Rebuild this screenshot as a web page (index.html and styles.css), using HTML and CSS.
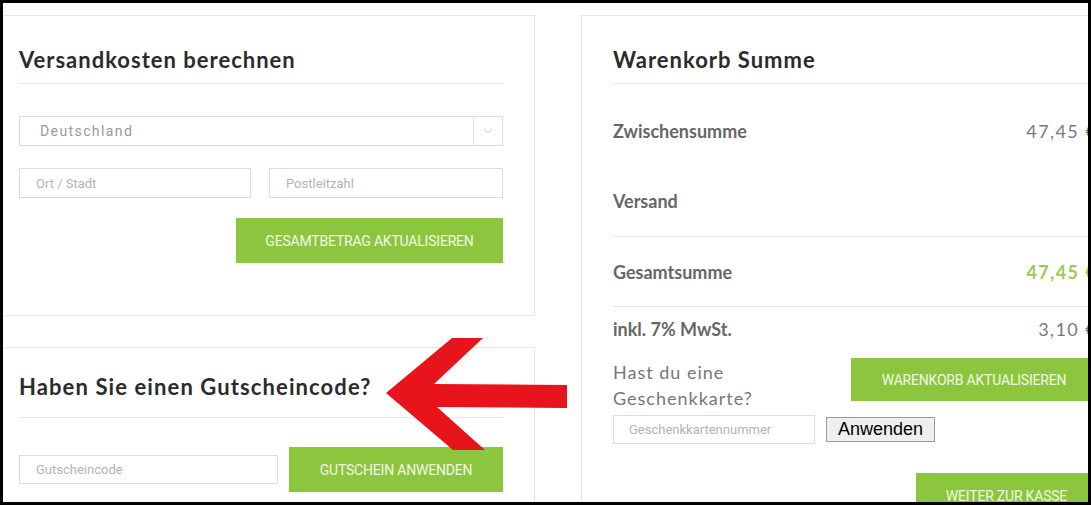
FILE: index.html
```html
<!DOCTYPE html>
<html lang="de">
<head>
<meta charset="utf-8">
<title>Warenkorb</title>
<link rel="stylesheet" href="styles.css">
</head>
<body>
<div class="frame">
  <div class="layout">
    <div class="left-col">
      <section class="panel panel-shipping">
        <h2 class="panel-title">Versandkosten berechnen</h2>
        <div class="select">
          <span class="select-value">Deutschland</span>
          <span class="select-toggle">
            <svg width="10" height="6" viewBox="0 0 10 6"><path d="M1 1 L5 5 L9 1" fill="none" stroke="#c8c8c8" stroke-width="1"/></svg>
          </span>
        </div>
        <div class="field-row">
          <div class="field"><span class="placeholder">Ort / Stadt</span></div>
          <div class="field"><span class="placeholder">Postleitzahl</span></div>
        </div>
        <div class="btn-row">
          <button class="btn btn-update">GESAMTBETRAG AKTUALISIEREN</button>
        </div>
      </section>
      <section class="panel panel-coupon">
        <h2 class="panel-title coupon-title">Haben Sie einen Gutscheincode?</h2>
        <div class="coupon-row">
          <div class="field coupon-field"><span class="placeholder">Gutscheincode</span></div>
          <button class="btn btn-coupon">GUTSCHEIN ANWENDEN</button>
        </div>
      </section>
    </div>
    <section class="panel panel-totals">
      <h2 class="panel-title">Warenkorb Summe</h2>
      <div class="total-row row-sub"><span class="label">Zwischensumme</span><span class="value">47,45 €</span></div>
      <div class="total-row row-ship"><span class="label">Versand</span></div>
      <div class="total-row row-sum"><span class="label">Gesamtsumme</span><span class="value value-green">47,45 €</span></div>
      <div class="total-row row-tax"><span class="label">inkl. 7% MwSt.</span><span class="value">3,10 €</span></div>
      <div class="gift">
        <div class="gift-left">
          <p class="gift-text">Hast du eine Geschenkkarte?</p>
          <div class="gift-form">
            <div class="field gift-field"><span class="placeholder">Geschenkkartennummer</span></div>
            <button class="native-btn">Anwenden</button>
          </div>
        </div>
        <button class="btn btn-cart">WARENKORB AKTUALISIEREN</button>
      </div>
      <div class="checkout-row">
        <button class="btn btn-checkout">WEITER ZUR KASSE</button>
      </div>
    </section>
  </div>
  <svg class="arrow" width="1091" height="505" viewBox="0 0 1091 505">
    <polygon points="386,393 452,338 483,338 434,384 567,385 567,408 437,407 485,450 453,450" fill="#e8141c"/>
  </svg>
</div>
</body>
</html>
```
FILE: styles.css
```css
* { box-sizing: border-box; }
html, body { margin: 0; padding: 0; background: #000; }
.frame {
  position: relative;
  width: 1091px;
  height: 505px;
  border: 3px solid #000;
  background: #fff;
  overflow: hidden;
  font-family: Lato, "Noto Sans", sans-serif;
}
.layout { display: flex; align-items: flex-start; }
.left-col { width: 532px; flex: none; margin-top: 12px; }
.panel { border: 1px solid #e6e6e6; background: #fff; }
.panel-shipping, .panel-coupon { border-left: none; padding: 0 31px 0 16px; }
.panel-shipping { padding-bottom: 52px; }
.panel-coupon { margin-top: 31px; height: 200px; }
.panel-title {
  margin: 0;
  padding: 29px 0 8px;
  line-height: 30px;
  font-size: 22px;
  font-weight: 700;
  letter-spacing: 1px;
  color: #2b2b2b;
  border-bottom: 1px solid #e6e6e6;
}
.coupon-title { padding: 24px 0 15px; letter-spacing: 1.1px; }
.select {
  margin-top: 32px;
  height: 30px;
  border: 1px solid #dcdcdc;
  display: flex;
  align-items: center;
}
.select-value {
  flex: 1;
  padding-left: 20px;
  font-family: Roboto, sans-serif;
  font-size: 14px;
  letter-spacing: 1.4px;
  color: #9a9a9a;
}
.select-toggle {
  width: 29px;
  height: 100%;
  border-left: 1px solid #e2e2e2;
  display: flex;
  align-items: center;
  justify-content: center;
}
.field-row { margin-top: 22px; display: flex; justify-content: space-between; }
.field {
  width: 232px;
  height: 30px;
  border: 1px solid #dcdcdc;
  display: flex;
  align-items: center;
  padding-left: 16px;
}
.field-row .field:last-child { width: 234px; }
.placeholder {
  font-family: Roboto, sans-serif;
  font-size: 13px;
  color: #b4b4b4;
}
.btn-row { margin-top: 20px; display: flex; justify-content: flex-end; }
.btn {
  flex: none;
  border: none;
  background: #8cc63f;
  color: #f2f7e4;
  font-family: Roboto, sans-serif;
  font-size: 14px;
  letter-spacing: -0.2px;
  padding: 0;
  margin: 0;
  white-space: nowrap;
  box-shadow: 0 1px 2px rgba(0,0,0,0.08);
}
.btn-update { width: 267px; height: 45px; }
.coupon-row { margin-top: 29px; display: flex; align-items: center; justify-content: space-between; }
.coupon-field { width: 259px; height: 29px; }
.btn-coupon { width: 214px; height: 45px; }

.panel-totals {
  flex: none;
  width: 547px;
  margin-top: 12px;
  margin-left: 46px;
  padding: 0 30px 0 31px;
  height: 520px;
  border-right: 1px solid #e6e6e6;
}
.total-row {
  display: flex;
  align-items: center;
  justify-content: space-between;
  height: 70px;
}
.row-sub { margin-top: 12px; }
.row-ship { height: 71px; border-bottom: 1px solid #e6e6e6; }
.row-sum { border-bottom: 1px solid #e6e6e6; }
.row-tax { height: 44px; }
.label { font-size: 18px; font-weight: 700; color: #666; }
.value { font-size: 18px; font-weight: 400; letter-spacing: 1.4px; color: #7a7a7a; }
.value-green { color: #9acb52; font-weight: 700; }
.gift { margin-top: 7px; display: flex; align-items: flex-start; }
.gift-left { flex: 1; min-width: 0; }
.gift-text {
  margin: 1px 0 0;
  width: 200px;
  font-size: 18px;
  line-height: 26px;
  letter-spacing: 1px;
  color: #777;
}
.gift-form { margin-top: 4px; display: flex; align-items: center; width: 330px; }
.gift-field { flex: none; width: 202px; height: 29px; padding-left: 15px; }
.native-btn {
  flex: none;
  margin-left: 11px;
  width: 109px;
  height: 25px;
  padding: 0;
  font-family: "Liberation Sans", Arial, sans-serif;
  font-size: 18px;
  color: #000;
  background: #efefef;
  border: 1px solid #9a9a9a;
  border-radius: 0;
}
.btn-cart { width: 246px; height: 43px; }
.checkout-row { margin-top: 29px; display: flex; justify-content: flex-end; }
.btn-checkout { width: 181px; height: 45px; }
.arrow { position: absolute; left: -3px; top: -3px; pointer-events: none; }
```
